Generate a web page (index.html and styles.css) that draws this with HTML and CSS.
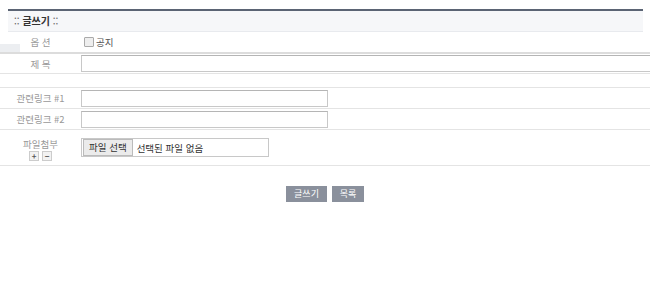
FILE: index.html
```html
<!DOCTYPE html>
<html lang="ko">
<head>
<meta charset="utf-8">
<link rel="stylesheet" href="styles.css">
</head>
<body>
<div class="board-head"><span class="dots">::</span> <b>글쓰기</b> <span class="dots">::</span></div>
<div class="form">
  <div class="row row-opt">
    <div class="label">옵 션</div>
    <div class="field"><span class="chk"></span><span class="chk-text">공지</span></div>
    <span class="shade"></span>
  </div>
  <div class="row row-title">
    <div class="label">제 목</div>
    <div class="field"><span class="input wide"></span></div>
  </div>
  <div class="row row-blank"></div>
  <div class="row row-link">
    <div class="label">관련링크 #1</div>
    <div class="field"><span class="input link"></span></div>
  </div>
  <div class="row row-link">
    <div class="label">관련링크 #2</div>
    <div class="field"><span class="input link"></span></div>
  </div>
  <div class="row row-file">
    <div class="label file-label">
      <span>파일첨부</span>
      <span class="pm"><span class="sq">+</span><span class="sq">−</span></span>
    </div>
    <div class="field"><span class="file"><span class="file-btn">파일 선택</span><span class="file-txt">선택된 파일 없음</span></span></div>
  </div>
</div>
<div class="actions">
  <span class="btn btn-write">글쓰기</span>
  <span class="btn btn-list">목록</span>
</div>
</body>
</html>
```
FILE: styles.css
```css
html, body {
  margin: 0;
  padding: 0;
  background: #fff;
  font-family: "Noto Sans CJK KR", "Noto Sans", sans-serif;
  font-size: 9.5px;
  color: #555;
}
.board-head {
  margin: 9px 7px 0 8px;
  border-top: 2px solid #5b6474;
  border-bottom: 1px solid #e8eaee;
  background: #f6f7f9;
  height: 20px;
  line-height: 20px;
  padding-left: 6px;
  color: #333;
  font-size: 10px;
}
.board-head b { font-weight: bold; }
.board-head .dots { color: #666; }
.form { width: 650px; }
.row {
  display: flex;
  align-items: center;
  border-bottom: 1px solid #e4e4e4;
  position: relative;
}
.label {
  width: 81px;
  flex: none;
  text-align: center;
  color: #999;
  font-size: 9.5px;
}
.field { flex: 1; display: flex; align-items: center; }
.row-opt { height: 20px; border-bottom: 2px solid #dcdcdc; }
.shade {
  position: absolute;
  left: 0;
  top: 12px;
  width: 20px;
  height: 8px;
  background: #eceef1;
}
.chk {
  width: 8px;
  height: 8px;
  border: 1px solid #aaa;
  background: #eee;
  border-radius: 1px;
  margin-left: 3px;
  margin-right: 2px;
}
.chk-text { color: #555; }
.row-title { height: 19px; }
.input {
  display: block;
  height: 15px;
  border: 1px solid #c8c8c8;
  border-top-color: #b5b5b5;
  background: #fff;
}
.wide { width: 580px; }
.link { width: 245px; }
.row-blank { height: 13px; }
.row-link { height: 20px; }
.row-file { height: 35px; align-items: flex-start; }
.file-label {
  display: flex;
  flex-direction: column;
  align-items: center;
  padding-top: 8px;
  line-height: 12px;
}
.pm { display: flex; gap: 3px; margin-top: 1px; }
.sq {
  width: 8px;
  height: 8px;
  border: 1px solid #ccc;
  background: #f2f2f2;
  font-size: 8px;
  line-height: 8px;
  text-align: center;
  color: #555;
  font-weight: bold;
}
.row-file .field { padding-top: 8px; }
.file {
  display: flex;
  align-items: center;
  width: 186px;
  height: 17px;
  border: 1px solid #c8c8c8;
  background: #fff;
}
.file-btn {
  height: 15px;
  line-height: 15px;
  padding: 0 5px;
  margin-left: 1px;
  background: #ebebeb;
  border: 1px solid #bbb;
  color: #333;
  font-size: 9.5px;
}
.file-txt { margin-left: 4px; color: #333; font-size: 9.5px; }
.actions {
  display: flex;
  justify-content: center;
  gap: 5px;
  margin-top: 20px;
}
.btn {
  display: block;
  height: 16px;
  line-height: 16px;
  background: #8a909c;
  color: #fff;
  font-size: 9px;
  text-align: center;
}
.btn-write { width: 41px; }
.btn-list { width: 32px; }
```
